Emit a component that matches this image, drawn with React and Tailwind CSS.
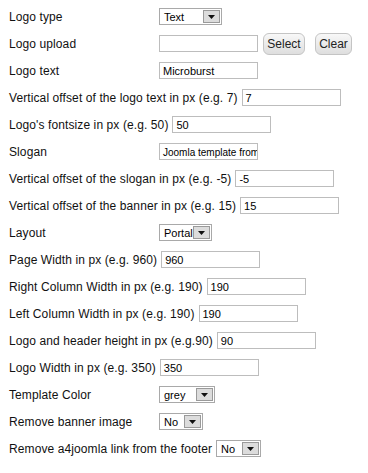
const rows = [
  { label: 'Logo type', kind: 'select', value: 'Text', w: 'w-[63px]' },
  { label: 'Logo upload', kind: 'upload' },
  { label: 'Logo text', kind: 'text', value: 'Microburst' },
  { label: 'Vertical offset of the logo text in px (e.g. 7)', kind: 'text', value: '7' },
  { label: "Logo's fontsize in px (e.g. 50)", kind: 'text', value: '50' },
  { label: 'Slogan', kind: 'text', value: 'Joomla template from a4joomla', small: true },
  { label: 'Vertical offset of the slogan in px (e.g. -5)', kind: 'text', value: '-5' },
  { label: 'Vertical offset of the banner in px (e.g. 15)', kind: 'text', value: '15' },
  { label: 'Layout', kind: 'select', value: 'Portal', w: 'w-[53px]' },
  { label: 'Page Width in px (e.g. 960)', kind: 'text', value: '960' },
  { label: 'Right Column Width in px (e.g. 190)', kind: 'text', value: '190' },
  { label: 'Left Column Width in px (e.g. 190)', kind: 'text', value: '190' },
  { label: 'Logo and header height in px (e.g.90)', kind: 'text', value: '90' },
  { label: 'Logo Width in px (e.g. 350)', kind: 'text', value: '350' },
  { label: 'Template Color', kind: 'select', value: 'grey', w: 'w-[56px]' },
  { label: 'Remove banner image', kind: 'select', value: 'No', w: 'w-[44px]' },
  { label: 'Remove a4joomla link from the footer', kind: 'select', value: 'No', w: 'w-[45px]' },
]

function Select({ value, w }) {
  return (
    <div className={`${w} h-[17px] border border-[#a9a9a9] bg-white flex items-stretch`}>
      <span className="flex-1 pl-[4px] pt-px text-[11px] leading-[15px] text-black overflow-hidden whitespace-nowrap">{value}</span>
      <span className="w-[17px] my-px mr-px border border-[#9a9a9a] bg-[#dcdcdc] flex items-center justify-center">
        <svg width="7" height="4" viewBox="0 0 7 4">
          <path d="M0 0h7L3.5 4z" fill="#111" />
        </svg>
      </span>
    </div>
  )
}

function TextBox({ value, small }) {
  return (
    <div
      className={`w-[99px] h-[17px] border border-[#bdbdbd] bg-white px-[3px] pt-px overflow-hidden whitespace-nowrap ${
        small ? 'text-[10px]' : 'text-[11px]'
      } leading-[15px] text-black`}
    >
      {value}
    </div>
  )
}

function Btn({ children, w }) {
  return (
    <button className={`${w} h-[22px] rounded-[6px] border border-[#c4c4c4] bg-gradient-to-b from-[#f8f8f8] to-[#dedede] text-[12px] text-[#222] leading-none`}>
      {children}
    </button>
  )
}

export default function App() {
  return (
    <div className="w-[368px] h-[473px] bg-white pt-[3px] pl-[9px] font-['Liberation_Sans',Arial,sans-serif]">
      {rows.map((r, i) => (
        <div key={i} className="h-[27px] flex items-center">
          <span className="min-w-[146px] mr-[4px] text-[12px] tracking-[0.1px] text-[#111] whitespace-nowrap">{r.label}</span>
          {r.kind === 'select' && <Select value={r.value} w={r.w} />}
          {r.kind === 'text' && <TextBox value={r.value} small={r.small} />}
          {r.kind === 'upload' && (
            <div className="flex items-center">
              <TextBox value="" />
              <span className="ml-[5px] flex"><Btn w="w-[42px]">Select</Btn></span>
              <span className="ml-[10px] flex"><Btn w="w-[37px]">Clear</Btn></span>
            </div>
          )}
        </div>
      ))}
    </div>
  )
}
